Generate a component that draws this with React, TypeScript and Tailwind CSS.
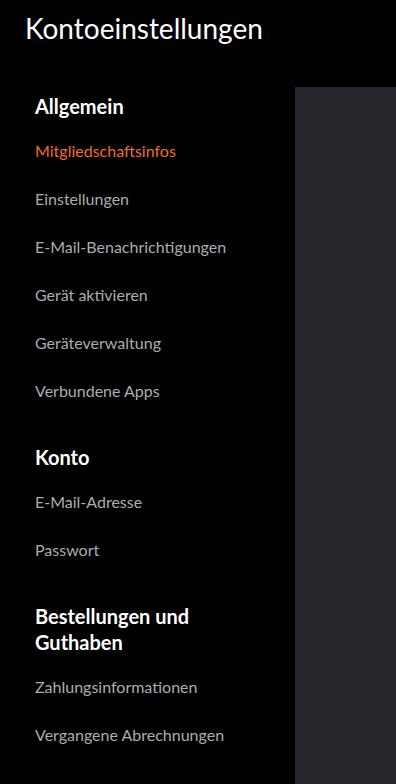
const sections = [
  {
    title: "Allgemein",
    links: [
      "Mitgliedschaftsinfos",
      "Einstellungen",
      "E-Mail-Benachrichtigungen",
      "Gerät aktivieren",
      "Geräteverwaltung",
      "Verbundene Apps",
    ],
  },
  { title: "Konto", links: ["E-Mail-Adresse", "Passwort"] },
  {
    title: "Bestellungen und Guthaben",
    links: ["Zahlungsinformationen", "Vergangene Abrechnungen"],
  },
];

export default function App() {
  const active = "Mitgliedschaftsinfos";

  return (
    <div className="min-h-[784px] h-[784px] bg-black flex flex-col font-['Lato','Liberation_Sans',sans-serif] overflow-hidden">
      {/* Page title */}
      <header className="h-[87px] shrink-0 pl-[25px] pt-3">
        <h1 className="text-[28px] leading-8 text-white">Kontoeinstellungen</h1>
      </header>

      <div className="flex flex-1">
        {/* Sidebar */}
        <nav className="w-[295px] shrink-0 px-[35px]">
          {sections.map((s, i) => (
            <div key={s.title} className={i > 0 ? "mt-[23px]" : ""}>
              <h2 className="pt-[6px] pb-[8px] text-[20px] leading-[26px] font-bold text-white">{s.title}</h2>
              <ul>
                {s.links.map((l) => (
                  <li key={l} className="h-12 flex items-center">
                    <a
                      className={
                        l === active
                          ? "text-[16px] text-[#f26b2d] -mt-px"
                          : "text-[16px] text-[#adadad] -mt-px"
                      }
                    >
                      {l}
                    </a>
                  </li>
                ))}
              </ul>
            </div>
          ))}
        </nav>

        {/* Content panel */}
        <main className="flex-1 bg-[#25262b]" />
      </div>
    </div>
  );
}
